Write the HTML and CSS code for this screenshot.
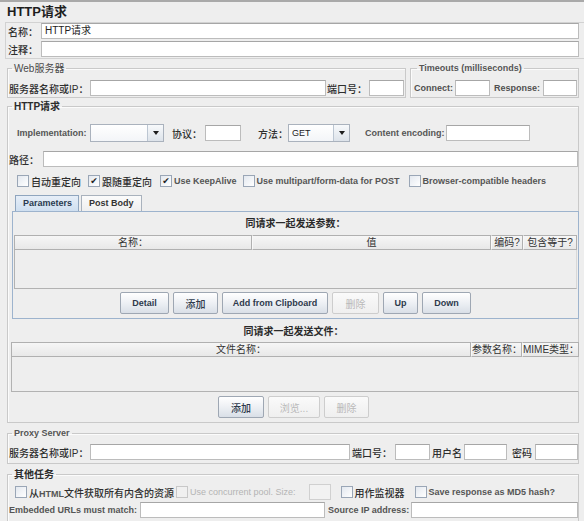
FILE: index.html
```html
<!DOCTYPE html>
<html lang="zh">
<head>
<meta charset="utf-8">
<title>HTTP请求</title>
<link rel="stylesheet" href="styles.css">
</head>
<body>
<div class="title">HTTP请求</div>

<div class="namebox">
  <div class="row"><span class="lbl w-name">名称：</span><div class="in w-nin">HTTP请求</div></div>
  <div class="row"><span class="lbl w-name">注释：</span><div class="in w-nin"></div></div>
</div>

<div class="toprow">
  <fieldset class="fs fs-web">
    <legend class="lg-light">Web服务器</legend>
    <div class="frow">
      <span class="lbl w-host">服务器名称或IP：</span><div class="in w-hostin"></div>
      <span class="lbl w-port">端口号：</span><div class="in w-35"></div>
    </div>
  </fieldset>
  <fieldset class="fs fs-time">
    <legend class="en lg-light">Timeouts (milliseconds)</legend>
    <div class="frow">
      <span class="lbl en w-conn">Connect:</span><div class="in w-35"></div>
      <span class="lbl en w-resp">Response:</span><div class="in w-34"></div>
    </div>
  </fieldset>
</div>

<fieldset class="fs fs-http">
  <legend class="lg-dark">HTTP请求</legend>
  <div class="frow row-impl">
    <span class="lbl en w-impl">Implementation:</span>
    <div class="combo w-combo1"><div class="cv"></div><div class="ca"><i class="tri"></i></div></div>
    <span class="lbl w-proto">协议：</span><div class="in w-36"></div>
    <span class="lbl w-meth">方法：</span>
    <div class="combo w-combo2"><div class="cv en-n">GET</div><div class="ca"><i class="tri"></i></div></div>
    <span class="lbl en w-enc">Content encoding:</span><div class="in w-84"></div>
  </div>
  <div class="frow row-path">
    <span class="lbl w-path">路径：</span><div class="in w-pathin"></div>
  </div>
  <div class="frow row-cb">
    <label class="cb cb1"><span class="box"></span><span>自动重定向</span></label>
    <label class="cb cb2"><span class="box on">✔</span><span>跟随重定向</span></label>
    <label class="cb cb3"><span class="box on">✔</span><span class="en">Use KeepAlive</span></label>
    <label class="cb cb4"><span class="box"></span><span class="en">Use multipart/form-data for POST</span></label>
    <label class="cb"><span class="box"></span><span class="en">Browser-compatible headers</span></label>
  </div>

  <div class="tabs">
    <div class="tab sel en">Parameters</div>
    <div class="tab en">Post Body</div>
  </div>
  <div class="tabpanel">
    <div class="sect-title">同请求一起发送参数：</div>
    <div class="table t-params">
      <div class="thead">
        <div class="th" style="width:238px">名称：</div>
        <div class="th" style="width:239px">值</div>
        <div class="th" style="width:32px">编码?</div>
        <div class="th th-last">包含等于?</div>
      </div>
      <div class="tbody tb-params"></div>
    </div>
    <div class="btnrow">
      <div class="btn en" style="width:49px">Detail</div>
      <div class="btn" style="width:45px">添加</div>
      <div class="btn en" style="width:106px">Add from Clipboard</div>
      <div class="btn dis" style="width:47px">删除</div>
      <div class="btn en" style="width:35px">Up</div>
      <div class="btn en" style="width:49px">Down</div>
    </div>
  </div>

  <div class="sect-title sect-files">同请求一起发送文件：</div>
  <div class="table t-files">
    <div class="thead">
      <div class="th" style="width:460px">文件名称：</div>
      <div class="th" style="width:51px">参数名称：</div>
      <div class="th th-last">MIME类型：</div>
    </div>
    <div class="tbody tb-files"></div>
  </div>
  <div class="btnrow btnrow-files">
    <div class="btn" style="width:46px">添加</div>
    <div class="btn dis" style="width:52px">浏览...</div>
    <div class="btn dis" style="width:45px">删除</div>
  </div>
</fieldset>

<fieldset class="fs fs-proxy">
  <legend class="en lg-light">Proxy Server</legend>
  <div class="frow">
    <span class="lbl w-host">服务器名称或IP：</span><div class="in w-pxhost"></div>
    <span class="lbl w-pxport">端口号：</span><div class="in w-35"></div>
    <span class="lbl w-user">用户名</span><div class="in w-43"></div>
    <span class="lbl w-pass">密码</span><div class="in w-43"></div>
  </div>
</fieldset>

<fieldset class="fs fs-other">
  <legend class="lg-dark">其他任务</legend>
  <div class="frow row-o1">
    <label class="cb o1"><span class="box"></span><span>从<span class="en">HTML</span>文件获取所有内含的资源</span></label>
    <label class="cb o2 disabled"><span class="box"></span><span class="en">Use concurrent pool. Size:</span></label>
    <div class="in w-22 in-dis"></div>
    <label class="cb o3"><span class="box"></span><span>用作监视器</span></label>
    <label class="cb"><span class="box"></span><span class="en">Save response as MD5 hash?</span></label>
  </div>
  <div class="frow row-o2">
    <span class="lbl en w-emb">Embedded URLs must match:</span><div class="in w-185"></div>
    <span class="lbl en w-src">Source IP address:</span><div class="in w-167"></div>
  </div>
</fieldset>
</body>
</html>
```

FILE: styles.css
```css
* { box-sizing: border-box; }
html, body { margin: 0; padding: 0; }
body {
  width: 584px;
  height: 521px;
  overflow: hidden;
  background: #eeeeee;
  border-top: 2px solid #a9a9a9;
  font-family: "Liberation Sans", "Noto Sans CJK SC", sans-serif;
  font-size: 10px;
  font-weight: 500;
  color: #2e2e2e;
}
.en { font-size: 9px; font-weight: bold; }
.en-n { font-size: 9px; font-weight: normal; }

.title {
  height: 20px;
  padding-left: 7px;
  font-size: 13px;
  font-weight: bold;
  line-height: 19px;
  color: #1e1e1e;
}

.namebox {
  margin-left: 5px;
  border: 1px solid #d2d2d2;
  border-right: none;
  padding: 0 0 1px 2px;
  display: flex;
  flex-direction: column;
  gap: 2px;
}
.row { display: flex; align-items: center; height: 16px; }

.lbl { flex: none; white-space: nowrap; }
.w-name { width: 33px; }
.w-nin { width: 538px; }

.in {
  flex: none;
  height: 16px;
  background: #ffffff;
  border: 1px solid #bcbcbc;
  border-top-color: #a6a6a6;
  font-weight: normal;
  font-size: 10px;
  line-height: 14px;
  padding-left: 3px;
  color: #222;
}
.in-dis { background: #f2f2f2; border-color: #d0d0d0; }

.fs {
  margin: 0;
  padding: 0;
  border: 1px solid #c9c9c9;
  box-shadow: inset 1px 1px 0 #fbfbfb;
  min-width: 0;
}
.fs legend { padding: 0 2px; margin-left: 3px; line-height: 11px; white-space: nowrap; }
.lg-light { color: #4a4a4a; font-weight: normal; }
.lg-light.en { font-weight: bold; color: #555; }
.lg-dark { color: #2c2c2c; font-weight: bold; }

.frow { display: flex; align-items: center; height: 16px; }

.toprow { display: flex; margin-top: 4px; }
.fs-web { margin-left: 7px; width: 399px; padding: 6px 0 1px 1px; }
.fs-time { margin-left: 4px; width: 169px; padding: 6px 0 1px 3px; }
.w-host { width: 81px; }
.w-hostin { width: 236px; }
.w-port { width: 43px; padding-left: 1px; }
.w-35 { width: 35px; }
.w-34 { width: 34px; }
.w-36 { width: 36px; }
.w-43 { width: 43px; }
.w-84 { width: 84px; }
.w-22 { width: 22px; }
.w-185 { width: 185px; }
.w-167 { width: 167px; }
.w-conn { width: 41px; color: #505050; }
.w-resp { width: 49px; margin-left: 4px; color: #505050; }

.fs-http { margin: 3px 0 0 7px; width: 572px; padding: 0 0 4px 1px; }
.row-impl { height: 18px; margin-top: 12px; padding-left: 8px; }
.w-impl { width: 73px; color: #555; }
.combo {
  flex: none;
  display: flex;
  height: 18px;
  border: 1px solid #aab2bd;
  background: linear-gradient(#ffffff, #f3f5f8);
}
.w-combo1 { width: 74px; }
.w-combo2 { width: 62px; }
.cv { flex: 1; padding-left: 3px; line-height: 16px; color: #222; }
.ca {
  width: 16px;
  border-left: 1px solid #bcc6d2;
  background: linear-gradient(#f7f9fb, #dde3ea);
  display: flex;
  align-items: center;
  justify-content: center;
}
.tri {
  width: 0; height: 0;
  border-left: 3.5px solid transparent;
  border-right: 3.5px solid transparent;
  border-top: 4px solid #1d1d1d;
}
.w-proto { width: 33px; margin-left: 8px; }
.w-meth { width: 30px; margin-left: 17px; }
.w-enc { width: 81px; margin-left: 15px; color: #555; }

.row-path { margin-top: 9px; }
.w-path { width: 34px; }
.w-pathin { width: 535px; }

.row-cb { margin-top: 7px; padding-left: 8px; height: 14px; }
.cb { display: flex; align-items: center; gap: 2px; white-space: nowrap; }
.cb .en { color: #555; }
.box {
  width: 12px; height: 12px;
  border: 1px solid #9aa6b6;
  background: linear-gradient(135deg, #e3e8ef, #ffffff);
  font-size: 9px;
  line-height: 10px;
  text-align: center;
  color: #222;
  font-weight: bold;
  font-family: "DejaVu Sans", sans-serif;
}
.cb1 { margin-right: 7px; }
.cb2 { margin-right: 8px; }
.cb3 { margin-right: 6px; }
.cb4 { margin-right: 9px; }
.disabled { color: #b0b0b0; }
.disabled .en { color: #b4b4b4; font-weight: normal; }
.disabled .box { border-color: #c8c8c8; background: #f0f0f0; }

.tabs { display: flex; gap: 2px; margin: 7px 0 0 6px; height: 16px; align-items: flex-end; }
.tab {
  height: 16px;
  padding: 0 7px;
  line-height: 14px;
  border: 1px solid #a9b2bd;
  border-bottom: none;
  background: linear-gradient(#fbfbfb, #efefef);
  color: #333;
}
.tab.sel { background: linear-gradient(#e6eef8, #cfdff0); border-color: #8fa5be; color: #2b3b50; width: 64px; }

.tabpanel {
  margin-left: 3px;
  width: 567px;
  height: 108px;
  border: 1px solid #9db3cd;
  padding: 0 1px;
}
.sect-title { height: 23px; line-height: 23px; text-align: center; color: #2a2a2a; font-weight: bold; }
.sect-files { height: 23px; line-height: 25px; }

.table { display: flex; flex-direction: column; }
.thead { display: flex; height: 15px; }
.th {
  flex: none;
  border: 1px solid #b0b0b0;
  border-left-color: #f8f8f8;
  background: linear-gradient(#f6f6f6, #e8e8e8);
  text-align: center;
  line-height: 13px;
  font-weight: normal;
  color: #333;
  white-space: nowrap;
  overflow: hidden;
}
.th:first-child { border-left-color: #b0b0b0; }
.th-last { flex: 1; }
.tbody { border: 1px solid #b2b2b2; border-top: none; border-right-color: #d8d8d8; background: #eeeeee; }
.tb-params { height: 39px; }
.t-files { margin-left: 2px; width: 568px; }
.tb-files { height: 35px; }

.btnrow { display: flex; justify-content: center; gap: 4px; margin-top: 3px; }
.btnrow-files { margin-top: 4px; }
.btn {
  height: 22px;
  border: 1px solid #9ea7b3;
  border-radius: 2px;
  background: linear-gradient(#ffffff, #edf0f4 50%, #d9dfe7);
  display: flex;
  align-items: center;
  justify-content: center;
  color: #2e3a4c;
  white-space: nowrap;
}
.btn.dis { color: #b9b9b9; border-color: #cdcdcd; background: linear-gradient(#fafafa, #efefef); font-weight: normal; }

.fs-proxy { margin: 5px 0 0 7px; width: 572px; padding: 5px 0 3px 1px; }
.w-pxhost { width: 260px; }
.w-pxport { width: 43px; margin-left: 2px; }
.w-user { width: 32px; margin-left: 2px; }
.w-pass { width: 23px; margin-left: 5px; }

.fs-other { margin: 5px 0 0 7px; width: 572px; padding: 4px 0 3px 1px; }
.row-o1 { padding-left: 6px; height: 16px; }
.o1 { margin-right: 2px; }
.o2 { margin-right: 13px; }
.o3 { margin-left: 10px; margin-right: 10px; }
.row-o2 { margin-top: 2px; }
.w-emb { width: 131px; color: #555; }
.w-src { width: 83px; margin-left: 3px; color: #555; }
```
